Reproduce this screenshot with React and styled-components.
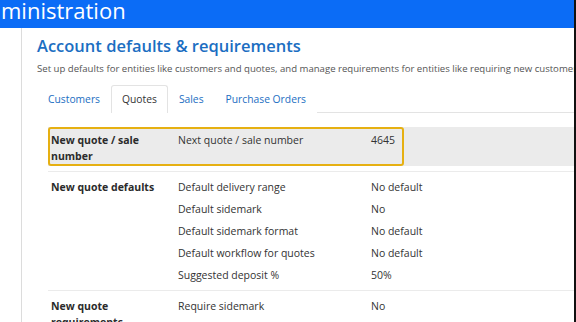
import React from 'react';
import styled, { createGlobalStyle } from 'styled-components';

const GlobalStyle = createGlobalStyle`
  html, body {
    margin: 0;
    padding: 0;
    background: #ffffff;
  }

  body {
    font-family: 'Open Sans', 'Noto Sans', sans-serif;
    color: #333333;
    overflow: hidden;
  }
`;

const Page = styled.div`
  width: 576px;
  height: 322px;
  box-sizing: border-box;
  border-right: 2px solid #111111;
  overflow: hidden;
  display: flex;
  flex-direction: column;
`;

const TopBar = styled.header`
  height: 28px;
  flex-shrink: 0;
  background: #0b6cf6;
  color: #ffffff;
  font-size: 22px;
  line-height: 20px;
  padding-left: 1px;
  white-space: nowrap;
`;

const Body = styled.div`
  display: flex;
  flex: 1;
`;

const SideGap = styled.div`
  width: 21px;
  flex-shrink: 0;
  border-right: 1px solid #dcdcdc;
`;

const Main = styled.main`
  flex: 1;
  padding: 7px 0 0 15px;
  min-width: 0;
`;

const Title = styled.h1`
  margin: 0;
  font-size: 16.5px;
  font-weight: 600;
  line-height: 22px;
  color: #1b6ec2;
  white-space: nowrap;
`;

const Lead = styled.p`
  margin: 5px 0 0;
  font-size: 9.6px;
  line-height: 14px;
  color: #555555;
  white-space: nowrap;
`;

const Tabs = styled.nav`
  display: flex;
  margin-top: 9px;
  border-bottom: 1px solid #e3e3e3;
  height: 27px;
`;

const Tab = styled.span`
  display: flex;
  align-items: center;
  padding: 0 10px 2px;
  font-size: 10.3px;
  color: ${({ active }) => (active ? '#333333' : '#1b6ec2')};
  border: 1px solid ${({ active }) => (active ? '#e3e3e3' : 'transparent')};
  border-bottom: none;
  border-radius: 3px 3px 0 0;
  background: #ffffff;
  margin-bottom: -1px;
`;

const Table = styled.div`
  margin: 14px 0 0 11px;
`;

const HighlightRow = styled.div`
  background: #ebebeb;
  margin-bottom: 5px;
`;

const Focus = styled.div`
  width: 356px;
  box-sizing: border-box;
  border: 2px solid #e6b012;
  border-radius: 3px;
  padding-left: 1px;
`;

const Row = styled.div`
  display: grid;
  grid-template-columns: 127px 193px 1fr;
  padding: ${({ plain }) => (plain ? '0' : '4px 0 4px 3px')};
  border-top: ${({ plain }) => (plain ? 'none' : '1px solid #ebebeb')};
`;

const Label = styled.div`
  grid-row: span ${({ lines }) => lines || 1};
  padding-top: 3px;
  font-size: 10.5px;
  line-height: 16px;
  font-weight: 700;
  color: #2b2b2b;
`;

const Cell = styled.div`
  font-size: 10.5px;
  line-height: 22px;
  color: #333333;
  white-space: nowrap;
`;

const sections = [
  {
    label: 'New quote defaults',
    items: [
      ['Default delivery range', 'No default'],
      ['Default sidemark', 'No'],
      ['Default sidemark format', 'No default'],
      ['Default workflow for quotes', 'No default'],
      ['Suggested deposit %', '50%'],
    ],
  },
  {
    label: 'New quote requirements',
    items: [
      ['Require sidemark', 'No'],
      ['Require customer PO', 'No'],
    ],
  },
];

const Section = ({ label, items }) => (
  <Row>
    <Label lines={items.length}>{label}</Label>
    {items.map(([name, value]) => (
      <React.Fragment key={name}>
        <Cell>{name}</Cell>
        <Cell>{value}</Cell>
      </React.Fragment>
    ))}
  </Row>
);

const App = () => (
  <>
    <GlobalStyle />
    <Page>
      <TopBar>ministration</TopBar>
      <Body>
        <SideGap />
        <Main>
          <Title>Account defaults &amp; requirements</Title>
          <Lead>
            Set up defaults for entities like customers and quotes, and manage requirements for
            entities like requiring new customers to have an email address.
          </Lead>
          <Tabs>
            <Tab>Customers</Tab>
            <Tab active>Quotes</Tab>
            <Tab>Sales</Tab>
            <Tab>Purchase Orders</Tab>
          </Tabs>
          <Table>
            <HighlightRow>
              <Focus>
                <Row plain>
                  <Label lines={2}>
                    New quote / sale
                    <br />
                    number
                  </Label>
                  <Cell>Next quote / sale number</Cell>
                  <Cell>4645</Cell>
                </Row>
              </Focus>
            </HighlightRow>
            {sections.map((section) => (
              <Section key={section.label} {...section} />
            ))}
          </Table>
        </Main>
      </Body>
    </Page>
  </>
);

export default App;
